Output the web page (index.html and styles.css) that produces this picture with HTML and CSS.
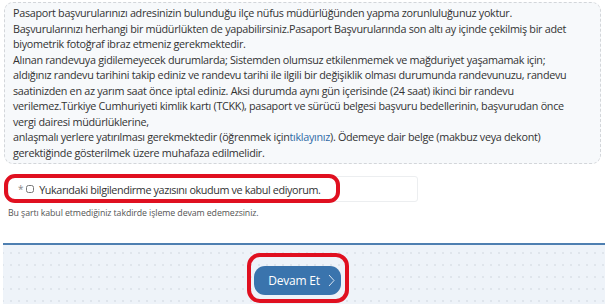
FILE: index.html
```html
<!DOCTYPE html>
<html lang="tr">
<head>
    <meta charset="UTF-8">
    <meta name="viewport" content="width=device-width, initial-scale=1.0">
    <title>Randevu Bilgilendirme</title>
    <link rel="stylesheet" href="styles.css">
</head>
<body>
    <div class="info">
        Pasaport başvurularınızı adresinizin bulunduğu ilçe nüfus müdürlüğünden yapma zorunluluğunuz yoktur.<br>
        Başvurularınızı herhangi bir müdürlükten de yapabilirsiniz.Pasaport Başvurularında son altı ay içinde çekilmiş bir adet<br>
        biyometrik fotoğraf ibraz etmeniz gerekmektedir.<br>
        Alınan randevuya gidilemeyecek durumlarda; Sistemden olumsuz etkilenmemek ve mağduriyet yaşamamak için;<br>
        aldığınız randevu tarihini takip ediniz ve randevu tarihi ile ilgili bir değişiklik olması durumunda randevunuzu, randevu<br>
        saatinizden en az yarım saat önce iptal ediniz. Aksi durumda aynı gün içerisinde (24 saat) ikinci bir randevu<br>
        verilemez.Türkiye Cumhuriyeti kimlik kartı (TCKK), pasaport ve sürücü belgesi başvuru bedellerinin, başvurudan önce<br>
        vergi dairesi müdürlüklerine,<br>
        anlaşmalı yerlere yatırılması gerekmektedir (öğrenmek için<a href="#">tıklayınız</a>). Ödemeye dair belge (makbuz veya dekont)<br>
        gerektiğinde gösterilmek üzere muhafaza edilmelidir.
    </div>

    <div class="agree">
        <label class="agree-field">
            <span class="req">*</span>
            <input type="checkbox" class="check">
            <span>Yukarıdaki bilgilendirme yazısını okudum ve kabul ediyorum.</span>
        </label>
        <div class="mark mark-agree"></div>
    </div>
    <p class="hint">Bu şartı kabul etmediğiniz takdirde işleme devam edemezsiniz.</p>

    <div class="footer">
        <div class="btn-wrap">
            <button type="button" class="btn">
                <span>Devam Et</span>
                <svg class="arrow" width="7" height="13" viewBox="0 0 7 13"><path d="M1 1 L6 6.5 L1 12" fill="none" stroke="#d9e5f2" stroke-width="1"/></svg>
            </button>
            <div class="mark mark-btn"></div>
        </div>
    </div>
</body>
</html>
```

FILE: styles.css
```css
body {
    margin: 0;
    padding: 2px 4px 0 4px;
    font-family: "Open Sans", Arial, sans-serif;
    color: #333;
    background: #fff;
    height: 304px;
    overflow: hidden;
    box-sizing: border-box;
}
.info {
    background: #f7f9fb;
    border: 1px dashed #d3d6da;
    border-radius: 9px;
    padding: 2px 8px 3px 8px;
    font-size: 10.8px;
    line-height: 15.5px;
    white-space: nowrap;
    letter-spacing: -0.3px;
}
.info a {
    color: #2f6aa6;
    text-decoration: none;
}
.agree {
    position: relative;
    margin-top: 12px;
    width: 414px;
}
.agree-field {
    display: flex;
    align-items: center;
    height: 24px;
    border: 1px solid #eceef0;
    border-radius: 3px;
    padding-left: 9px;
    margin-left: 4px;
    font-size: 10.8px;
    letter-spacing: -0.38px;
    color: #333;
}
.req {
    color: #888;
    font-size: 10px;
    margin-right: 3px;
}
.check {
    width: 8px;
    height: 8px;
    margin: 0 5px 0 0;
}
.mark {
    position: absolute;
    border: 4px solid #e01020;
    border-radius: 11px;
    pointer-events: none;
}
.mark-agree {
    left: 0;
    top: -2px;
    width: 328px;
    height: 21px;
}
.hint {
    margin: 5px 0 0 4px;
    font-size: 8.8px;
    letter-spacing: -0.1px;
    color: #555;
}
.footer {
    margin: 24px -4px 0 -1px;
    height: 64px;
    border-top: 2px solid #4e7fb1;
    background-color: #eef3f9;
    background-image: radial-gradient(circle, #d7dde4 0.6px, transparent 0.9px);
    background-size: 8px 12px;
    background-position: 4px 2px;
    display: flex;
    justify-content: center;
}
.btn-wrap {
    position: relative;
    margin-top: 21px;
    margin-left: -13px;
}
.btn {
    display: flex;
    align-items: center;
    justify-content: center;
    gap: 8px;
    width: 87px;
    height: 29px;
    border: none;
    border-radius: 11px;
    background: #3a74ad;
    color: #fff;
    font-family: "Open Sans", Arial, sans-serif;
    font-size: 12px;
    letter-spacing: -0.2px;
    padding: 0 0 0 8px;
}
.arrow {
    display: block;
}
.mark-btn {
    left: -7px;
    top: -13px;
    width: 94px;
    height: 42px;
    border-radius: 13px;
}
```
